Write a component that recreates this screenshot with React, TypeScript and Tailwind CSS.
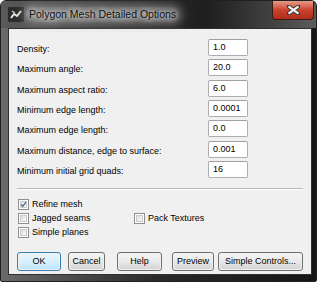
const rows: [string, string][] = [
  ["Density:", "1.0"],
  ["Maximum angle:", "20.0"],
  ["Maximum aspect ratio:", "6.0"],
  ["Minimum edge length:", "0.0001"],
  ["Maximum edge length:", "0.0"],
  ["Maximum distance, edge to surface:", "0.001"],
  ["Minimum initial grid quads:", "16"],
];

function Check({ checked, label }: { checked?: boolean; label: string }) {
  return (
    <div className="flex items-center gap-[3px] h-[11px]">
      <div className="w-[11px] h-[11px] border border-[#8e8f8f] bg-white p-[1px] shrink-0">
        <div className="w-full h-full border border-[#c9cacb] bg-gradient-to-br from-[#dcdcdc] to-[#fbfbfb] flex items-center justify-center">
          {checked && (
            <svg width="9" height="9" viewBox="0 0 9 9" className="-m-[1px]">
              <path d="M1.5 4.5 L3.6 6.8 L7.6 1.6" fill="none" stroke="#4a5f97" strokeWidth="1.6" />
            </svg>
          )}
        </div>
      </div>
      <span className="leading-none">{label}</span>
    </div>
  );
}

function Btn({ label, w, def }: { label: string; w: string; def?: boolean }) {
  return (
    <div
      className={
        def
          ? `${w} h-[19px] rounded-[3px] border border-[#3c7fb1] p-[1px] shrink-0`
          : `${w} h-[19px] rounded-[3px] border border-[#707070] p-[1px] shrink-0`
      }
    >
      <div
        className={
          def
            ? "w-full h-full rounded-[2px] bg-gradient-to-b from-[#eaf6fd] via-[#d9f0fc] to-[#bee6fd] flex items-center justify-center"
            : "w-full h-full rounded-[2px] bg-gradient-to-b from-[#f4f4f4] via-[#e9e9e9] to-[#d4d4d4] flex items-center justify-center"
        }
      >
        <span className="leading-none">{label}</span>
      </div>
    </div>
  );
}

export default function App() {
  return (
    <div className="w-[319px] h-[286px] bg-white text-black" style={{ fontFamily: '"Liberation Sans", Arial, sans-serif' }}>
      <div className="w-[317px] h-[282px] rounded-t-[6px] rounded-b-[2px] border border-[#202020] bg-gradient-to-r from-[#6a6a6a] via-[#2a2a2a] to-[#161616] flex flex-col">
        {/* title bar */}
        <div className="h-[27px] flex items-start relative rounded-t-[5px] bg-gradient-to-r from-[#5a5a5a] via-[#1e1e1e] via-65% to-[#5c5c5c]">
          <div className="mt-[6px] ml-[7px] w-[16px] h-[15px] bg-[#2c2c2c] rounded-[1px] flex items-center justify-center">
            <svg width="14" height="13" viewBox="0 0 14 13">
              <path d="M2 10 L5 6 L8 8 L12 3" fill="none" stroke="#e8e8e8" strokeWidth="2" />
              <path d="M3 3 L6 5" stroke="#d0d0d0" strokeWidth="1.5" />
            </svg>
          </div>
          <div
            className="ml-[2px] mt-[6px] text-[10.5px] leading-none text-[#111] px-[3px] py-[2px] rounded-[10px] bg-[#b0b0b0]/35 shadow-[0_0_8px_4px_rgba(170,170,170,0.35)]"
            style={{ textShadow: "0 0 5px #fff, 0 0 9px #eee, 0 0 12px #ccc" }}
          >
            Polygon Mesh Detailed Options
          </div>
          <div className="absolute right-[2px] top-0 w-[42px] h-[19px] rounded-b-[4px] border border-t-0 border-[#3a1a15] bg-gradient-to-b from-[#e49a88] via-[#c8432c] to-[#b02e1a] flex items-center justify-center">
            <svg width="13" height="10" viewBox="0 0 13 10">
              <path d="M1 1 L12 9 M12 1 L1 9" stroke="#3a3a3a" strokeWidth="4" strokeLinecap="square" />
              <path d="M1.5 1.3 L11.5 8.7 M11.5 1.3 L1.5 8.7" stroke="#f4f4f4" strokeWidth="2.2" />
            </svg>
          </div>
        </div>
        {/* client */}
        <div className="ml-[7px] mr-[4px] h-[247px] border border-[#303030] bg-[#f0f0f0] text-[9px]">
          <div className="pt-[10px] pl-[8px] flex flex-col gap-[3.33px]">
            {rows.map(([l, v]) => (
              <div key={l} className="flex items-center h-[17px]">
                <span className="w-[191px] pt-[4px] leading-none">{l}</span>
                <div className="w-[40px] h-[17px] rounded-[2px] border border-[#abadb3] border-t-[#a0a0a0] bg-white pl-[4px] flex items-center">
                  <span className="leading-none">{v}</span>
                </div>
              </div>
            ))}
          </div>
          <div className="mt-[10px] ml-[8px] w-[286px] h-[2px] border-t border-[#b8b8b8] border-b border-b-white" />
          <div className="mt-[9px] ml-[9px] flex flex-col gap-[3px]">
            <Check checked label="Refine mesh" />
            <div className="flex">
              <div className="w-[116px]">
                <Check label="Jagged seams" />
              </div>
              <Check label="Pack Textures" />
            </div>
            <Check label="Simple planes" />
          </div>
          <div className="mt-[14px] ml-[8px] flex">
            <Btn label="OK" w="w-[44px]" def />
            <div className="w-[7px]" />
            <Btn label="Cancel" w="w-[37px]" />
            <div className="w-[12px]" />
            <Btn label="Help" w="w-[45px]" />
            <div className="w-[10px]" />
            <Btn label="Preview" w="w-[42px]" />
            <div className="w-[4px]" />
            <Btn label="Simple Controls..." w="w-[85px]" />
          </div>
        </div>
      </div>
    </div>
  );
}
